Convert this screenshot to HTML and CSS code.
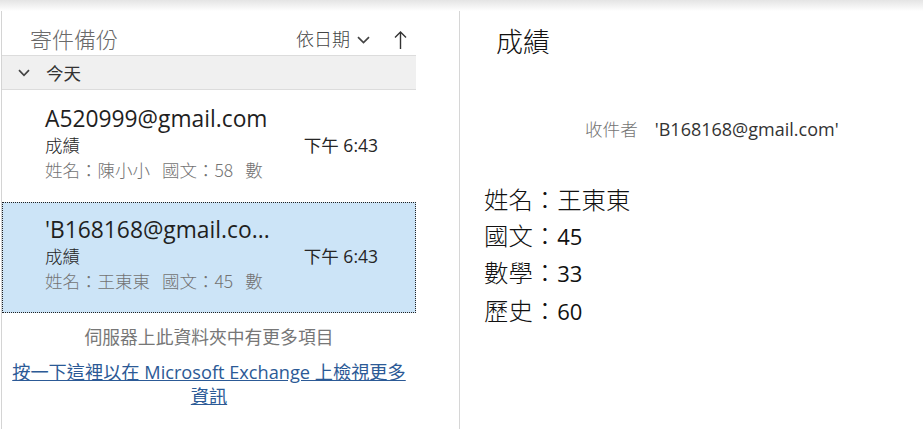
FILE: index.html
```html
<!DOCTYPE html>
<html lang="zh-Hant">
<head>
<meta charset="utf-8">
<link rel="stylesheet" href="styles.css">
</head>
<body>
<div class="topbar"></div>
<div class="main">
  <div class="listpane">
    <div class="list">
      <div class="list-header">
        <span class="folder">寄件備份</span>
        <span class="sort">依日期
          <svg class="chev" width="13" height="8" viewBox="0 0 13 8"><path d="M1 1.2 L6.5 6.5 L12 1.2" fill="none" stroke="#444" stroke-width="1.7"/></svg>
        </span>
        <svg class="arrow" width="13" height="20" viewBox="0 0 13 20"><path d="M6.5 19 V2 M1 7.5 L6.5 2 L12 7.5" fill="none" stroke="#333" stroke-width="1.4"/></svg>
      </div>
      <div class="group">
        <svg class="gchev" width="12" height="8" viewBox="0 0 12 8"><path d="M1 1.2 L6 6.3 L11 1.2" fill="none" stroke="#444" stroke-width="1.7"/></svg>
        <span class="gtitle">今天</span>
      </div>
      <div class="item first">
        <div class="sender">A520999@gmail.com</div>
        <div class="row"><span class="subject">成績</span><span class="time">下午 6:43</span></div>
        <div class="preview">姓名：陳小小<span class="gap"></span>國文：58<span class="gap"></span>數</div>
      </div>
      <div class="item selected">
        <div class="sender">'B168168@gmail.co...</div>
        <div class="row"><span class="subject">成績</span><span class="time">下午 6:43</span></div>
        <div class="preview">姓名：王東東<span class="gap"></span>國文：45<span class="gap"></span>數</div>
      </div>
      <div class="more">伺服器上此資料夾中有更多項目</div>
      <a class="link" href="#">按一下這裡以在 Microsoft Exchange 上檢視更多資訊</a>
    </div>
  </div>
  <div class="reader">
    <div class="rsubject">成績</div>
    <div class="to"><span class="tolabel">收件者</span><span class="toaddr">'B168168@gmail.com'</span></div>
    <div class="body">
      <div class="line">姓名：王東東</div>
      <div class="line">國文：<span class="num">45</span></div>
      <div class="line">數學：<span class="num">33</span></div>
      <div class="line">歷史：<span class="num">60</span></div>
    </div>
  </div>
</div>
</body>
</html>
```
FILE: styles.css
```css
html, body {
  margin: 0;
  padding: 0;
  background: #fff;
}
body {
  width: 923px;
  height: 429px;
  overflow: hidden;
  font-family: "Open Sans", "Noto Sans", "Noto Sans CJK TC", sans-serif;
  color: #262626;
}
.topbar {
  height: 11px;
  background: linear-gradient(#e4e4e4, #f4f4f4 60%, #fff);
}
.main {
  display: flex;
  height: 418px;
}
.listpane {
  width: 457px;
  border-left: 1px solid #d4d4d4;
  margin-left: 1px;
  border-right: 1px solid #d6d6d6;
}
.list {
  width: 414px;
}
.list-header {
  height: 45px;
  box-sizing: border-box;
  padding-top: 10px;
  border-bottom: 1px solid #dcdcdc;
  display: flex;
  align-items: center;
  padding-left: 28px;
  padding-right: 9px;
  line-height: 30px;
}
.folder {
  font-size: 22px;
  color: #6a6a6a;
  flex: 1;
  font-family: "Noto Sans CJK TC", sans-serif;
  font-weight: 300;
}
.sort {
  font-size: 18px;
  color: #444;
  font-family: "Noto Sans CJK TC", sans-serif;
  font-weight: 300;
  display: flex;
  align-items: center;
  gap: 7px;
}
.chev {
  margin-top: 3px;
}
.arrow {
  margin-left: 24px;
  margin-top: 3px;
}
.group {
  height: 33px;
  background: #f0f0f0;
  border-bottom: 1px solid #dcdcdc;
  display: flex;
  align-items: center;
  padding-left: 16px;
}
.gtitle {
  margin-left: 16px;
  font-size: 17.5px;
  font-weight: 400;
  color: #333;
  font-family: "Noto Sans CJK TC", sans-serif;
}
.item {
  height: 112px;
  padding-left: 42px;
  padding-right: 37px;
  box-sizing: border-box;
  padding-top: 13px;
  border: 1px dotted transparent;
}
.item.selected {
  background: #cce4f7;
  border: 1px dotted #222;
  height: 111px;
  padding-top: 12px;
}
.sender {
  font-size: 22.8px;
  line-height: 30px;
  color: #1f1f1f;
  white-space: nowrap;
}
.row {
  display: flex;
  justify-content: space-between;
  align-items: baseline;
  font-size: 17.5px;
  line-height: 22px;
  color: #262626;
}
.subject {
  font-family: "Noto Sans CJK TC", sans-serif;
  font-weight: 300;
}
.time {
  font-family: "Open Sans", "Noto Sans CJK TC", sans-serif;
  font-size: 17.5px;
}
.preview {
  font-size: 17.5px;
  line-height: 26px;
  margin-top: 1px;
  color: #737373;
  font-family: "Noto Sans CJK TC", sans-serif;
  font-weight: 300;
  white-space: nowrap;
}
.gap {
  display: inline-block;
  width: 12px;
}
.more {
  margin-top: 12px;
  text-align: center;
  font-size: 17.8px;
  color: #777;
  font-family: "Noto Sans CJK TC", sans-serif;
  font-weight: 400;
  line-height: 22px;
}
.link {
  display: block;
  margin-top: 13px;
  text-align: center;
  font-size: 18.2px;
  line-height: 24px;
  color: #2c5a96;
  padding: 0 4px;
}
.reader {
  flex: 1;
  padding-left: 24px;
}
.rsubject {
  font-size: 27px;
  color: #111;
  padding-left: 12px;
  margin-top: 13px;
  line-height: 34px;
  font-family: "Noto Sans CJK TC", sans-serif;
  font-weight: 300;
}
.to {
  margin-top: 60px;
  padding-left: 101px;
  font-size: 17.6px;
  line-height: 22px;
}
.tolabel {
  color: #737373;
  font-family: "Noto Sans CJK TC", sans-serif;
  font-weight: 300;
  margin-right: 17px;
}
.toaddr {
  color: #333;
  font-size: 18px;
}
.body {
  margin-top: 41px;
  font-size: 24.4px;
  color: #111;
}
.line {
  line-height: 35.5px;
  font-family: "Noto Sans CJK TC", sans-serif;
  font-weight: 300;
}
.num {
  font-family: "Open Sans", sans-serif;
  font-weight: 400;
  font-size: 22px;
}
```
